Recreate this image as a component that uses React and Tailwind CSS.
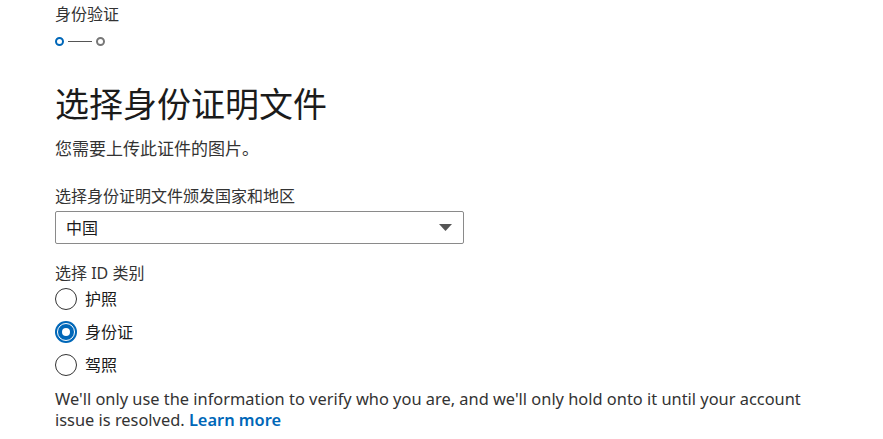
import React from 'react';

const font = { fontFamily: '"Segoe UI", "Noto Sans", "Noto Sans CJK SC", sans-serif' };

const Radio = ({ label, checked }) => (
  <label className="flex items-center h-[33px] gap-[8px]">
    {checked ? (
      <span className="relative w-[22px] h-[22px] rounded-full bg-[#0067b8] flex items-center justify-center">
        <span className="absolute inset-[2px] rounded-full border border-white" />
        <span className="w-[8px] h-[8px] rounded-full bg-white" />
      </span>
    ) : (
      <span className="w-[22px] h-[22px] rounded-full border border-[#333] bg-white" />
    )}
    <span className="text-[16px] text-[#1b1b1b]">{label}</span>
  </label>
);

export default function App() {
  return (
    <div className="w-[883px] h-[439px] bg-white overflow-hidden px-[55px] text-[#1b1b1b]" style={font}>
      {/* step header */}
      <div className="pt-[3px] text-[16px] leading-[22px] text-[#333]">身份验证</div>
      <div className="flex items-center mt-[11px] h-[10px]">
        <span className="w-[9px] h-[9px] rounded-full border-2 border-[#0067b8]" />
        <span className="w-[24px] h-px bg-[#555] mx-[4px]" />
        <span className="w-[9px] h-[9px] rounded-full border-2 border-[#777]" />
      </div>

      <h1 className="mt-[37px] text-[34px] leading-[42px] font-normal text-[#1b1b1b]">选择身份证明文件</h1>
      <p className="mt-[12px] text-[17px] leading-[24px] text-[#333]">您需要上传此证件的图片。</p>

      <div className="mt-[24px] text-[16px] leading-[22px] text-[#333]">选择身份证明文件颁发国家和地区</div>
      <div className="mt-[4px] w-[409px] h-[33px] border border-[#8a8a8a] rounded-[2px] flex items-center justify-between pl-[10px] pr-[11px]">
        <span className="text-[16px] text-[#1b1b1b]">中国</span>
        <svg width="13" height="8" viewBox="0 0 13 8">
          <path d="M0 0 H13 L6.5 7 Z" fill="#555" />
        </svg>
      </div>

      <div className="mt-[18px] text-[16px] leading-[22px] text-[#333]">选择 ID 类别</div>
      <div className="flex flex-col mt-[-2px]">
        <Radio label="护照" />
        <Radio label="身份证" checked />
        <Radio label="驾照" />
      </div>

      <p className="mt-[7px] w-[770px] text-[16.4px] leading-[21px] text-[#333]">
        We'll only use the information to verify who you are, and we'll only hold onto it until your account issue is resolved.{' '}
        <a className="font-semibold text-[#0067b8]" href="#">Learn more</a>
      </p>
    </div>
  );
}
